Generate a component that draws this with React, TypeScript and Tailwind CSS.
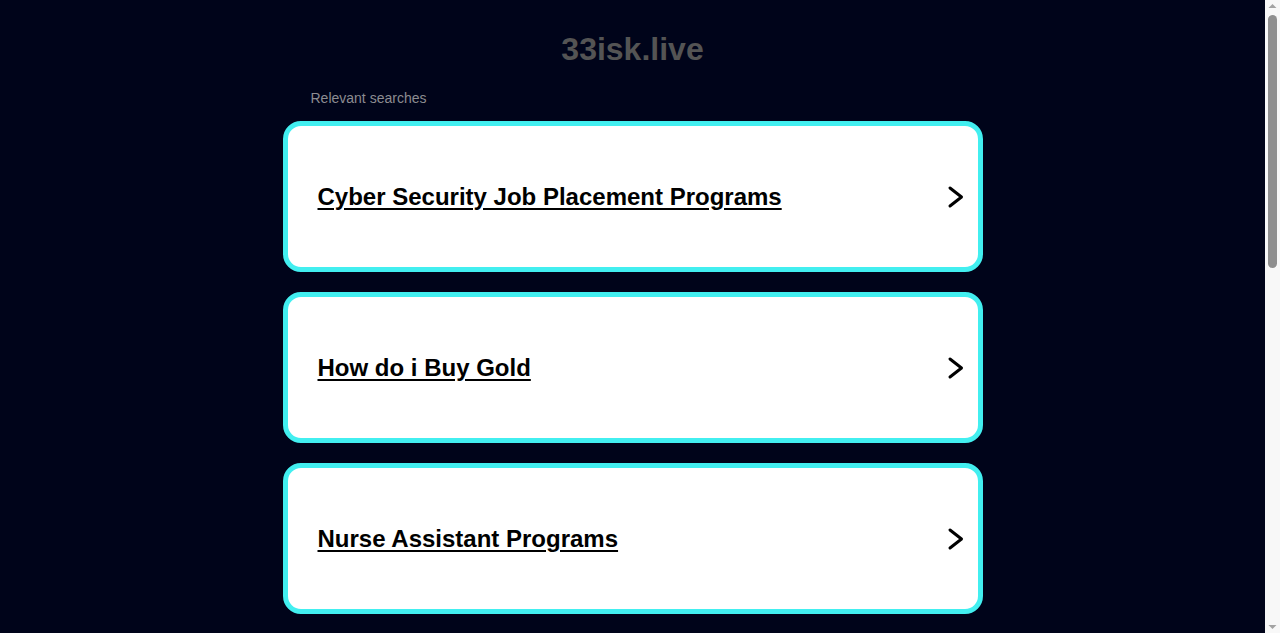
import React from 'react';

const searches = [
    'Cyber Security Job Placement Programs',
    'How do i Buy Gold',
    'Nurse Assistant Programs',
    'Online Degree Programs',
    'Medical Billing And Coding Jobs',
];

function Chevron() {
    return (
        <svg width="20" height="24" viewBox="0 0 20 24" className="shrink-0">
            <polyline points="5,3 16.5,12 5,21" fill="none" stroke="#000" strokeWidth="3" strokeLinecap="round" strokeLinejoin="round" />
        </svg>
    );
}

// browser scrollbar as seen in the screenshot
function Scrollbar() {
    return (
        <div className="flex h-[633px] w-[15px] shrink-0 flex-col items-center bg-[#f8f8f8]">
            <svg width="15" height="14" viewBox="0 0 15 14">
                <polygon points="3.5,8 7.5,4 11.5,8" fill="#a3a3a3" />
            </svg>
            <div className="mt-[1px] h-[253px] w-[9px] rounded-[5px] bg-[#8f8f8f]" />
            <div className="flex-1" />
            <svg width="15" height="14" viewBox="0 0 15 14">
                <polygon points="3.5,6 7.5,10 11.5,6" fill="#a3a3a3" />
            </svg>
        </div>
    );
}

export default function App() {
    return (
        <div className="flex h-[633px] overflow-hidden bg-[#00041a] font-['Liberation_Sans',Arial,sans-serif]">
            <div className="min-w-0 flex-1">
                <div className="mx-auto w-[700px] pt-[31px] pb-10">
                    <h1 className="text-center text-[32px] font-bold leading-[37px] text-[#545454]">33isk.live</h1>
                    <p className="mt-[22px] pl-[28px] text-[14px] leading-[16px] text-[#8c8c91]">Relevant searches</p>
                    <div className="mt-[15px] flex flex-col gap-[20px]">
                        {searches.map((s) => (
                            <a
                                key={s}
                                href="#"
                                className="flex h-[151px] shrink-0 items-center justify-between rounded-[18px] border-[5px] border-[#42eff0] bg-white pl-[30px] pr-[13px]"
                            >
                                <span className="text-[24px] font-bold leading-[28px] text-black underline underline-offset-[3px] decoration-2">{s}</span>
                                <Chevron />
                            </a>
                        ))}
                    </div>
                </div>
            </div>
            <Scrollbar />
        </div>
    );
}
